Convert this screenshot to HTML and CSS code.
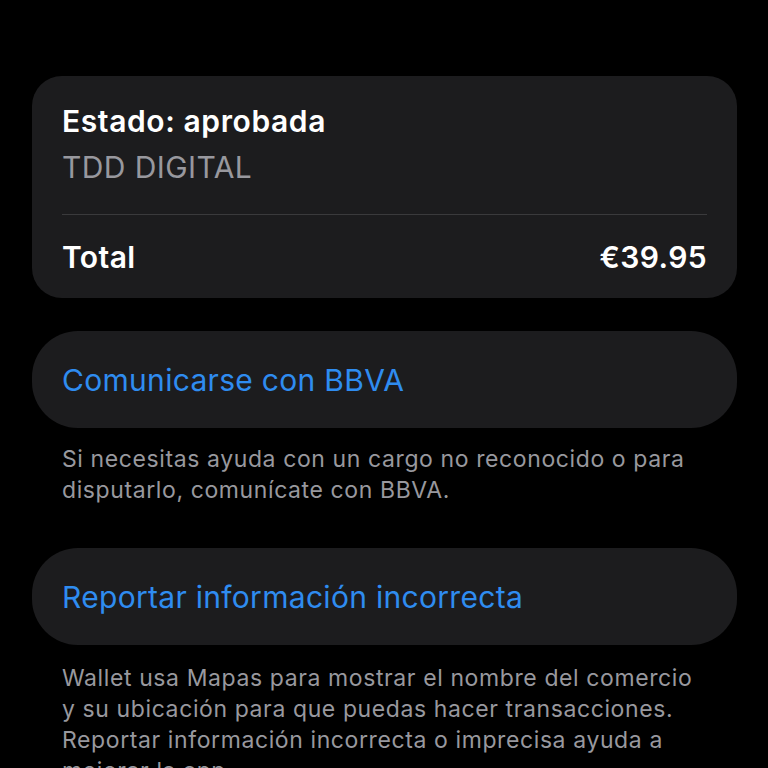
FILE: index.html
```html
<!DOCTYPE html>
<html lang="es">
<head>
  <meta charset="UTF-8" />
  <meta name="viewport" content="width=device-width, initial-scale=1.0" />
  <title>Transacción</title>
  <link rel="stylesheet" href="styles.css">
</head>
<body>
  <div class="screen">
    <!-- Detalle de la transacción -->
    <div class="card summary">
      <div class="summary-head">
        <div class="status">Estado: aprobada</div>
        <div class="card-name">TDD DIGITAL</div>
      </div>
      <div class="total-row">
        <span>Total</span>
        <span>€39.95</span>
      </div>
    </div>

    <div class="card action">
      <a href="#" class="action-link">Comunicarse con BBVA</a>
    </div>
    <p class="note">Si necesitas ayuda con un cargo no reconocido o para disputarlo, comunícate con BBVA.</p>

    <div class="card action second">
      <a href="#" class="action-link">Reportar información incorrecta</a>
    </div>
    <p class="note last">Wallet usa Mapas para mostrar el nombre del comercio y su ubicación para que puedas hacer transacciones. Reportar información incorrecta o imprecisa ayuda a mejorar la app.</p>
  </div>
</body>
</html>
```

FILE: styles.css
```css
body {
  margin: 0;
  padding: 0;
  background: #000;
  color: #fff;
  font-family: Inter, "Noto Sans", sans-serif;
  height: 768px;
  overflow: hidden;
}

.screen {
  padding: 76px 31px 0 32px;
  display: flex;
  flex-direction: column;
}

.card {
  background: #1c1c1e;
  border-radius: 30px;
}

.summary {
  padding: 0 30px;
}

.summary-head {
  padding: 22px 0 24px;
  border-bottom: 1px solid #3a3a3c;
}

.status {
  font-size: 30px;
  font-weight: 600;
  line-height: 46px;
  letter-spacing: 0.6px;
}

.card-name {
  font-size: 30px;
  line-height: 46px;
  letter-spacing: 0.4px;
  color: #98989e;
}

.total-row {
  display: flex;
  justify-content: space-between;
  align-items: center;
  height: 83px;
  font-size: 30px;
  font-weight: 600;
  letter-spacing: 0.4px;
}

.action {
  margin-top: 33px;
  height: 97px;
  border-radius: 46px;
  display: flex;
  align-items: center;
  padding: 0 30px;
}

.action.second {
  margin-top: 43px;
}

.action-link {
  color: #2f8cf0;
  text-decoration: none;
  font-size: 30px;
  letter-spacing: 0.3px;
}

.note {
  margin: 16px 0 0;
  padding: 0 30px;
  font-size: 23px;
  line-height: 30.5px;
  letter-spacing: 0.6px;
  color: #98989e;
}

.note.last {
  margin-top: 18px;
  line-height: 31px;
}
```
